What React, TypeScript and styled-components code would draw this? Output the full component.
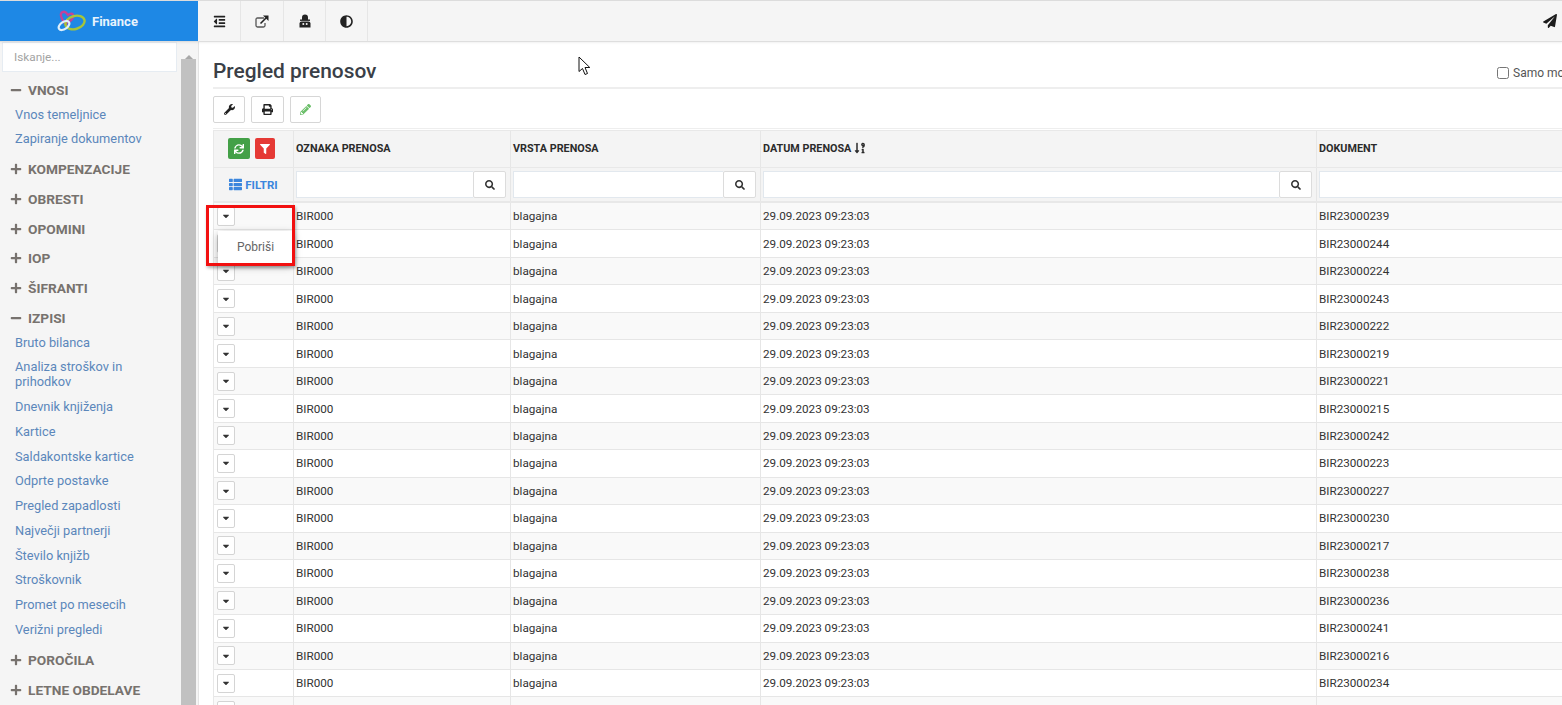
import React from "react";
import styled, { createGlobalStyle } from "styled-components";
import {
  FaAdjust,
  FaCaretDown,
  FaFilter,
  FaMinus,
  FaOutdent,
  FaPaperPlane,
  FaPencilAlt,
  FaPlus,
  FaPrint,
  FaSearch,
  FaSortNumericDownAlt,
  FaSync,
  FaThList,
  FaWrench,
} from "react-icons/fa";

const GlobalStyle = createGlobalStyle`
  html, body {
    margin: 0;
    padding: 0;
    height: 100%;
    background: #fff;
    overflow: hidden;
    font-family: Roboto, "Liberation Sans", sans-serif;
    color: #333;
  }
  * { box-sizing: border-box; }
`;

const Shell = styled.div`
  position: relative;
  width: 1562px;
  height: 705px;
  overflow: hidden;
  display: flex;
  flex-direction: column;
`;

const TopBar = styled.header`
  flex: 0 0 42px;
  display: flex;
  border-top: 1px solid #dcdcdc;
  border-bottom: 1px solid #dedede;
  background: #f5f5f5;
  box-shadow: 0 1px 2px rgba(0, 0, 0, 0.06);
  z-index: 2;
`;

const Brand = styled.div`
  flex: 0 0 198px;
  display: flex;
  align-items: center;
  gap: 6px;
  padding-left: 57px;
  background: #1e88e5;
  color: #e8f3fc;
  font-size: 13px;
  font-weight: 700;
`;

const TopButton = styled.div<{ $width: number }>`
  flex: 0 0 ${(p) => p.$width}px;
  display: flex;
  align-items: center;
  justify-content: center;
  border-right: 1px solid #e6e6e6;
  color: #222;
  font-size: 13px;
`;

const TopEnd = styled.div`
  margin-left: auto;
  padding-right: 5px;
  display: flex;
  align-items: center;
  color: #1c1c1c;
  font-size: 14px;
`;

const Body = styled.div`
  flex: 1;
  display: flex;
  min-height: 0;
`;

const Sidebar = styled.aside`
  flex: 0 0 199px;
  display: flex;
  background: #f5f5f5;
  border-right: 1px solid #e4e4e4;
  overflow: hidden;
`;

const SideColumn = styled.div`
  flex: 0 0 181px;
`;

const SearchBox = styled.input`
  display: block;
  width: 175px;
  height: 30px;
  margin: 0 0 0 2px;
  padding: 0 11px;
  border: 1px solid #e6ecf2;
  background: #fff;
  font: 11.8px Roboto, sans-serif;
  outline: none;

  &::placeholder {
    color: #a3a3a3;
  }
`;

const Nav = styled.nav`
  padding-top: 3px;
`;

const GroupHead = styled.div`
  height: 29.7px;
  display: flex;
  align-items: center;
  gap: 6px;
  padding-left: 10px;
  color: #77726e;
  font-size: 13.7px;
  font-weight: 700;

  svg {
    font-size: 12px;
    width: 12px;
  }
`;

const LinkList = styled.div`
  margin: -3px 0 3.4px;
`;

const NavLink = styled.a`
  display: flex;
  align-items: center;
  min-height: 24.75px;
  padding: 4.875px 30px 4.875px 15px;
  color: #5b87bb;
  font-size: 12.8px;
  line-height: 15px;
`;

const ScrollTrack = styled.div`
  flex: 0 0 15px;
  display: flex;
  flex-direction: column;
  align-items: center;
`;

const ScrollArrow = styled.div`
  margin-top: 7px;
  height: 10px;
  width: 0;
  border-left: 4px solid transparent;
  border-right: 4px solid transparent;
  border-bottom: 4px solid #a8a8a8;
`;

const ScrollThumb = styled.div`
  flex: 1;
  align-self: stretch;
  background: #c1c1c1;
`;

const Main = styled.main`
  flex: 1;
  min-width: 0;
  overflow: hidden;
  padding: 0 0 0 14px;
`;

const TitleRow = styled.div`
  height: 47px;
  display: flex;
  align-items: center;
  justify-content: space-between;
  border-bottom: 2px solid #eeeeee;
  padding-top: 12px;
`;

const Title = styled.h1`
  margin: 0;
  font-size: 20.9px;
  font-weight: 500;
  color: #3a3f47;
`;

const OnlyMine = styled.label`
  display: flex;
  align-items: center;
  gap: 4px;
  width: 65px;
  flex: none;
  white-space: nowrap;
  overflow: hidden;
  font-size: 12px;
  color: #555;
  margin-top: 5px;

  input {
    margin: 0;
    width: 12px;
    height: 12px;
    flex: none;
  }
`;

const Toolbar = styled.div`
  height: 40px;
  display: flex;
  align-items: center;
  gap: 6px;
  padding-top: 2px;
  border-bottom: 1px solid #eeeeee;
  margin-bottom: 1px;
`;

const ToolButton = styled.button<{ $width: number; $color: string }>`
  width: ${(p) => p.$width}px;
  height: 27px;
  padding: 0;
  display: flex;
  align-items: center;
  justify-content: center;
  background: #fff;
  border: 1px solid #d6d6d6;
  border-radius: 2px;
  color: ${(p) => p.$color};
  font-size: 11px;
`;

const COLUMNS = "80px 217px 250px 556px 1fr";

const Grid = styled.div`
  width: 1500px;
  font-size: 11.7px;
  border-left: 1px solid #e8e8e8;
`;

const HeadRow = styled.div<{ $height: number }>`
  display: grid;
  grid-template-columns: ${COLUMNS};
  height: ${(p) => p.$height}px;
  background: #f4f4f4;
  border-top: 1px solid #e8e8e8;
`;

const HeadCell = styled.div`
  display: flex;
  align-items: center;
  gap: 3px;
  padding: 0 0 2px 2px;
  border-right: 1px solid #e6e6e6;
  font-size: 10.8px;
  font-weight: 700;
  color: #2b2b2b;

  svg {
    font-size: 12px;
  }
`;

const ActionCell = styled(HeadCell)`
  justify-content: flex-start;
  gap: 5px;
  padding: 0 0 1px 14px;
`;

const FilterLabel = styled(HeadCell)`
  justify-content: center;
  gap: 3px;
  padding: 0;
  color: #3b86dd;
  font-size: 11.5px;

  svg {
    font-size: 13px;
  }
`;

const ColorButton = styled.div<{ $bg: string; $width: number }>`
  width: ${(p) => p.$width}px;
  height: 21px;
  display: flex;
  align-items: center;
  justify-content: center;
  background: ${(p) => p.$bg};
  border-radius: 2px;
  color: #fff;

  svg {
    font-size: 10px;
  }
`;

const FilterCell = styled.div`
  display: flex;
  align-items: center;
  padding: 0 4px 0 2px;
  border-right: 1px solid #e6e6e6;
`;

const FilterInput = styled.input`
  flex: 1;
  min-width: 0;
  height: 27px;
  border: 1px solid #e2e8ee;
  border-right: none;
  background: #fff;
  outline: none;
`;

const FilterSearch = styled.div`
  flex: 0 0 33px;
  height: 27px;
  display: flex;
  align-items: center;
  justify-content: center;
  background: #fff;
  border: 1px solid #dcdcdc;
  border-radius: 2px;
  color: #333;
  font-size: 10px;
`;

const BodyRows = styled.div`
  border-top: 2px solid #e8e8e8;
`;

const Row = styled.div<{ $striped: boolean }>`
  position: relative;
  display: grid;
  grid-template-columns: ${COLUMNS};
  height: 27.47px;
  background: ${(p) => (p.$striped ? "#f9f9f9" : "#fff")};
  border-bottom: 1px solid #e6e6e6;
`;

const Cell = styled.div`
  display: flex;
  align-items: center;
  padding-left: 2px;
  border-right: 1px solid #e6e6e6;
  color: #333;
  white-space: nowrap;
`;

const ToggleCell = styled(Cell)`
  padding-left: 3px;
`;

const Toggle = styled.div`
  width: 18px;
  height: 19px;
  display: flex;
  align-items: center;
  justify-content: center;
  background: #fff;
  border: 1px solid #d4d4d4;
  border-radius: 2px;
  color: #333;
  font-size: 10px;
`;

const Menu = styled.div`
  position: absolute;
  left: 4px;
  top: 28px;
  width: 75px;
  height: 32px;
  display: flex;
  align-items: center;
  justify-content: center;
  background: #fff;
  box-shadow: 0 3px 8px rgba(0, 0, 0, 0.35);
  color: #666;
  font-size: 12px;
  z-index: 3;
`;

const Callout = styled.div`
  position: absolute;
  left: 206px;
  top: 205px;
  width: 89px;
  height: 61px;
  border: 3px solid #f21010;
  box-shadow: 1px 2px 3px rgba(0, 0, 0, 0.3);
  z-index: 4;
  pointer-events: none;
`;

const Cursor = styled.svg`
  position: absolute;
  left: 578px;
  top: 56px;
  z-index: 5;
`;

const Logo = () => (
  <svg width="29" height="22" viewBox="0 0 29 22" fill="none">
    <path d="M10 16 C4 9 2 3 6 2 C9 1 10 4 11 5 C13 3 17 3 16 7 C15 10 12 12 9 13" stroke="#c2439a" strokeWidth="2.4" />
    <ellipse cx="18" cy="12.5" rx="9.8" ry="6.5" transform="rotate(-16 18 12.5)" stroke="#a5c53a" strokeWidth="2.4" />
    <ellipse cx="7" cy="15.5" rx="6" ry="3.6" transform="rotate(-35 7 15.5)" stroke="#dff0fb" strokeWidth="2.2" />
  </svg>
);

const ShareIcon = () => (
  <svg width="14" height="13" viewBox="0 0 14 13" fill="none">
    <path d="M9 3 H2.5 Q1 3 1 4.5 V10.5 Q1 12 2.5 12 H8.5 Q10 12 10 10.5 V8" stroke="#555" strokeWidth="1.3" />
    <path d="M5.5 8.5 L11 3" stroke="#222" strokeWidth="1.6" />
    <path d="M8 0.5 H13.5 V6 Z" fill="#222" />
  </svg>
);

const AgentIcon = () => (
  <svg width="12" height="14" viewBox="0 0 12 14">
    <path d="M3 6 V3.5 Q3 0.5 6 0.5 Q9 0.5 9 3.5 V6 Z" fill="#222" />
    <rect x="1" y="5.5" width="10" height="1.4" fill="#222" />
    <path d="M0.5 13.5 V9.5 Q0.5 7.5 2.5 7.5 H9.5 Q11.5 7.5 11.5 9.5 V13.5 Z" fill="#222" />
    <circle cx="4.3" cy="10" r="1" fill="#f5f5f5" />
    <circle cx="7.7" cy="10" r="1" fill="#f5f5f5" />
  </svg>
);

type Group = { label: string; open?: boolean; links?: string[] };

const groups: Group[] = [
  { label: "VNOSI", open: true, links: ["Vnos temeljnice", "Zapiranje dokumentov"] },
  { label: "KOMPENZACIJE" },
  { label: "OBRESTI" },
  { label: "OPOMINI" },
  { label: "IOP" },
  { label: "ŠIFRANTI" },
  {
    label: "IZPISI",
    open: true,
    links: [
      "Bruto bilanca",
      "Analiza stroškov in prihodkov",
      "Dnevnik knjiženja",
      "Kartice",
      "Saldakontske kartice",
      "Odprte postavke",
      "Pregled zapadlosti",
      "Največji partnerji",
      "Število knjižb",
      "Stroškovnik",
      "Promet po mesecih",
      "Verižni pregledi",
    ],
  },
  { label: "POROČILA" },
  { label: "LETNE OBDELAVE" },
];

const documents = [239, 244, 224, 243, 222, 219, 221, 215, 242, 223, 227, 230, 217, 238, 236, 241, 216, 234, 220];

const FilterField = () => (
  <FilterCell>
    <FilterInput />
    <FilterSearch>
      <FaSearch />
    </FilterSearch>
  </FilterCell>
);

export default function App() {
  return (
    <Shell>
      <GlobalStyle />
      <TopBar>
        <Brand>
          <Logo />
          Finance
        </Brand>
        <TopButton $width={43}><FaOutdent /></TopButton>
        <TopButton $width={43}><ShareIcon /></TopButton>
        <TopButton $width={42}><AgentIcon /></TopButton>
        <TopButton $width={42}><FaAdjust /></TopButton>
        <TopEnd><FaPaperPlane /></TopEnd>
      </TopBar>
      <Body>
        <Sidebar>
          <SideColumn>
            <SearchBox placeholder="Iskanje..." />
            <Nav>
              {groups.map((group) => (
                <div key={group.label}>
                  <GroupHead>
                    {group.open ? <FaMinus /> : <FaPlus />}
                    {group.label}
                  </GroupHead>
                  {group.links && (
                    <LinkList>
                      {group.links.map((link) => <NavLink key={link}>{link}</NavLink>)}
                    </LinkList>
                  )}
                </div>
              ))}
            </Nav>
          </SideColumn>
          <ScrollTrack>
            <ScrollArrow />
            <ScrollThumb />
          </ScrollTrack>
        </Sidebar>
        <Main>
          <TitleRow>
            <Title>Pregled prenosov</Title>
            <OnlyMine>
              <input type="checkbox" />
              Samo moje
            </OnlyMine>
          </TitleRow>
          <Toolbar>
            <ToolButton $width={32} $color="#222"><FaWrench /></ToolButton>
            <ToolButton $width={33} $color="#222"><FaPrint /></ToolButton>
            <ToolButton $width={31} $color="#6cbf6a"><FaPencilAlt /></ToolButton>
          </Toolbar>
          <Grid>
            <HeadRow $height={37}>
              <ActionCell>
                <ColorButton $bg="#43a047" $width={22}><FaSync /></ColorButton>
                <ColorButton $bg="#e53935" $width={20}><FaFilter /></ColorButton>
              </ActionCell>
              <HeadCell>OZNAKA PRENOSA</HeadCell>
              <HeadCell>VRSTA PRENOSA</HeadCell>
              <HeadCell>DATUM PRENOSA <FaSortNumericDownAlt /></HeadCell>
              <HeadCell>DOKUMENT</HeadCell>
            </HeadRow>
            <HeadRow $height={34}>
              <FilterLabel><FaThList /> FILTRI</FilterLabel>
              <FilterField />
              <FilterField />
              <FilterField />
              <FilterField />
            </HeadRow>
            <BodyRows>
              {documents.map((doc, index) => (
                <Row key={doc} $striped={index % 2 === 0}>
                  <ToggleCell>
                    <Toggle><FaCaretDown /></Toggle>
                    {index === 0 && <Menu>Pobriši</Menu>}
                  </ToggleCell>
                  <Cell>BIR000</Cell>
                  <Cell>blagajna</Cell>
                  <Cell>29.09.2023 09:23:03</Cell>
                  <Cell>BIR23000{doc}</Cell>
                </Row>
              ))}
            </BodyRows>
          </Grid>
        </Main>
      </Body>
      <Callout />
      <Cursor width="14" height="20" viewBox="0 0 14 20">
        <path d="M1 1 L1 15.5 L4.5 12.5 L7 18.5 L9.5 17.5 L7 11.5 L11.8 11.5 Z" fill="#fff" stroke="#111" strokeWidth="1" />
      </Cursor>
    </Shell>
  );
}
